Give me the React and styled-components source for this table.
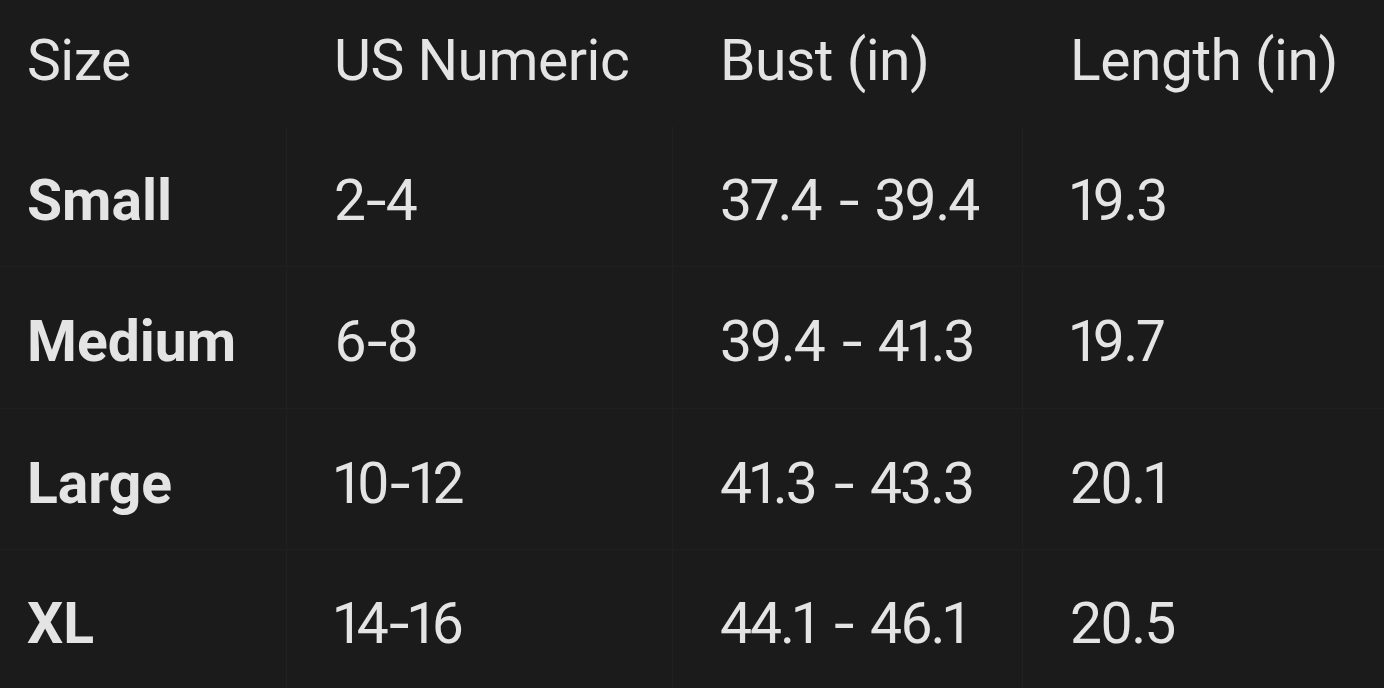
import React from "react";
import styled, { createGlobalStyle, css } from "styled-components";

const Global = createGlobalStyle`
  html, body {
    margin: 0;
    background: #1b1b1b;
  }
`;

const SizeTable = styled.div`
  display: grid;
  grid-template-columns: 287px 386px 350px 361px;
  grid-template-rows: 126px 141px 142px 141px 138px;
  width: 1384px;
  height: 688px;
  overflow: hidden;
  background: #1b1b1b;
  color: #e4e4e4;
  font-family: Roboto, "Noto Sans", sans-serif;
  font-size: 57px;
`;

const cellBase = css`
  display: flex;
  align-items: center;
  white-space: pre;
  padding-left: ${(p) => (p.$first ? "27px" : "47px")};
`;

const HeadCell = styled.div`
  ${cellBase}
  padding-bottom: 6px;
  font-weight: 400;
  letter-spacing: -0.5px;
`;

const BodyCell = styled.div`
  ${cellBase}
  padding-top: 8px;
  border-right: ${(p) => (p.$last ? "none" : "1px solid #202020")};
  border-bottom: ${(p) => (p.$bottom ? "none" : "1px solid #202020")};
  font-weight: ${(p) => (p.$label ? 700 : 400)};
  ${(p) =>
    !p.$label &&
    css`
      font-variant-numeric: proportional-nums;
      letter-spacing: -2px;
      word-spacing: 4px;
    `}
`;

const Dash = styled.span`
  display: inline-block;
  margin: 0 4px;
  transform: scaleX(1.3);
`;

const head = ["Size", "US Numeric", "Bust (in)", "Length (in)"];
const rows = [
  ["Small", "2-4", "37.4 - 39.4", "19.3"],
  ["Medium", "6-8", "39.4 - 41.3", "19.7"],
  ["Large", "10-12", "41.3 - 43.3", "20.1"],
  ["XL", "14-16", "44.1 - 46.1", "20.5"],
];

function Value({ text }) {
  const parts = text.split("-");
  return parts.map((p, i) => (
    <React.Fragment key={i}>
      {i > 0 && <Dash>-</Dash>}
      {p}
    </React.Fragment>
  ));
}

export default function App() {
  return (
    <>
      <Global />
      <SizeTable>
        {head.map((h, i) => (
          <HeadCell key={h} $first={i === 0}>
            {h}
          </HeadCell>
        ))}
        {rows.map((r, ri) =>
          r.map((c, ci) => (
            <BodyCell
              key={ri + "-" + ci}
              $first={ci === 0}
              $label={ci === 0}
              $last={ci === r.length - 1}
              $bottom={ri === rows.length - 1}
            >
              {ci === 0 ? c : <Value text={c} />}
            </BodyCell>
          ))
        )}
      </SizeTable>
    </>
  );
}
